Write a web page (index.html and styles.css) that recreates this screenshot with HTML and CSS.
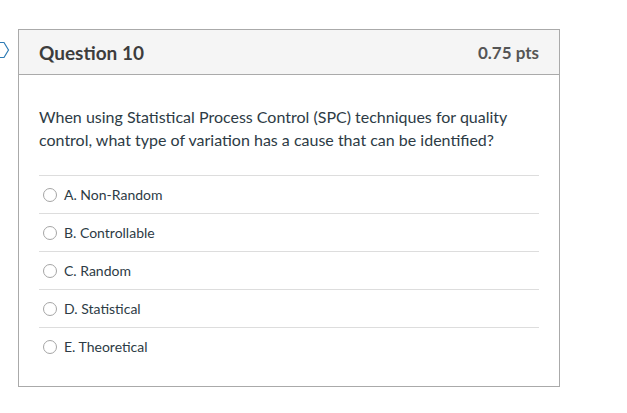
FILE: index.html
```html
<!DOCTYPE html>
<html>
<head>
<meta charset="utf-8">
<link rel="stylesheet" href="styles.css">
</head>
<body>
<div class="page">
  <svg class="flag" width="10" height="18" viewBox="0 0 10 18"><path d="M-6 1.5 H4 L8.5 9 L4 16.5 H-6" fill="none" stroke="#2d7bb5" stroke-width="1.2"/></svg>
  <div class="card">
    <div class="header">
      <h2 class="title">Question 10</h2>
      <span class="pts">0.75 pts</span>
    </div>
    <div class="body">
      <p class="text">When using Statistical Process Control (SPC) techniques for quality control, what type of variation has a cause that can be identified?</p>
      <div class="answers">
        <label class="answer"><span class="radio"></span>A. Non-Random</label>
        <label class="answer"><span class="radio"></span>B. Controllable</label>
        <label class="answer"><span class="radio"></span>C. Random</label>
        <label class="answer"><span class="radio"></span>D. Statistical</label>
        <label class="answer"><span class="radio"></span>E. Theoretical</label>
      </div>
    </div>
  </div>
</div>
</body>
</html>
```
FILE: styles.css
```css
html, body {
  margin: 0;
  padding: 0;
  background: #fff;
}
body {
  font-family: Lato, "Liberation Sans", sans-serif;
  color: #2d3b45;
}
.page {
  position: relative;
  padding: 29px 0 0 18px;
}
.flag {
  position: absolute;
  left: 0;
  top: 41px;
}
.card {
  width: 542px;
  height: 358px;
  box-sizing: border-box;
  border: 1px solid #aaaaaa;
}
.header {
  height: 45px;
  box-sizing: border-box;
  background: #f5f5f5;
  border-bottom: 1px solid #aaaaaa;
  display: flex;
  align-items: center;
  justify-content: space-between;
  padding: 0 20px 0 20px;
}
.title {
  margin: 0;
  font-size: 19px;
  font-weight: 700;
  color: #3d3d3d;
}
.pts {
  font-size: 17px;
  font-weight: 700;
  color: #555555;
}
.body {
  padding: 30px 20px 0 20px;
}
.text {
  margin: 0;
  font-size: 16px;
  line-height: 23px;
  color: #2d3b45;
}
.answers {
  margin-top: 24px;
  border-top: 1px solid #dddddd;
}
.answer {
  display: flex;
  align-items: center;
  height: 37px;
  border-bottom: 1px solid #dddddd;
  font-size: 14px;
  color: #2d3b45;
  padding-left: 4px;
}
.answer:last-child {
  border-bottom: none;
}
.radio {
  width: 12px;
  height: 12px;
  border: 1px solid #a5a5a5;
  border-radius: 50%;
  margin-right: 7px;
  background: #fff;
}
```
